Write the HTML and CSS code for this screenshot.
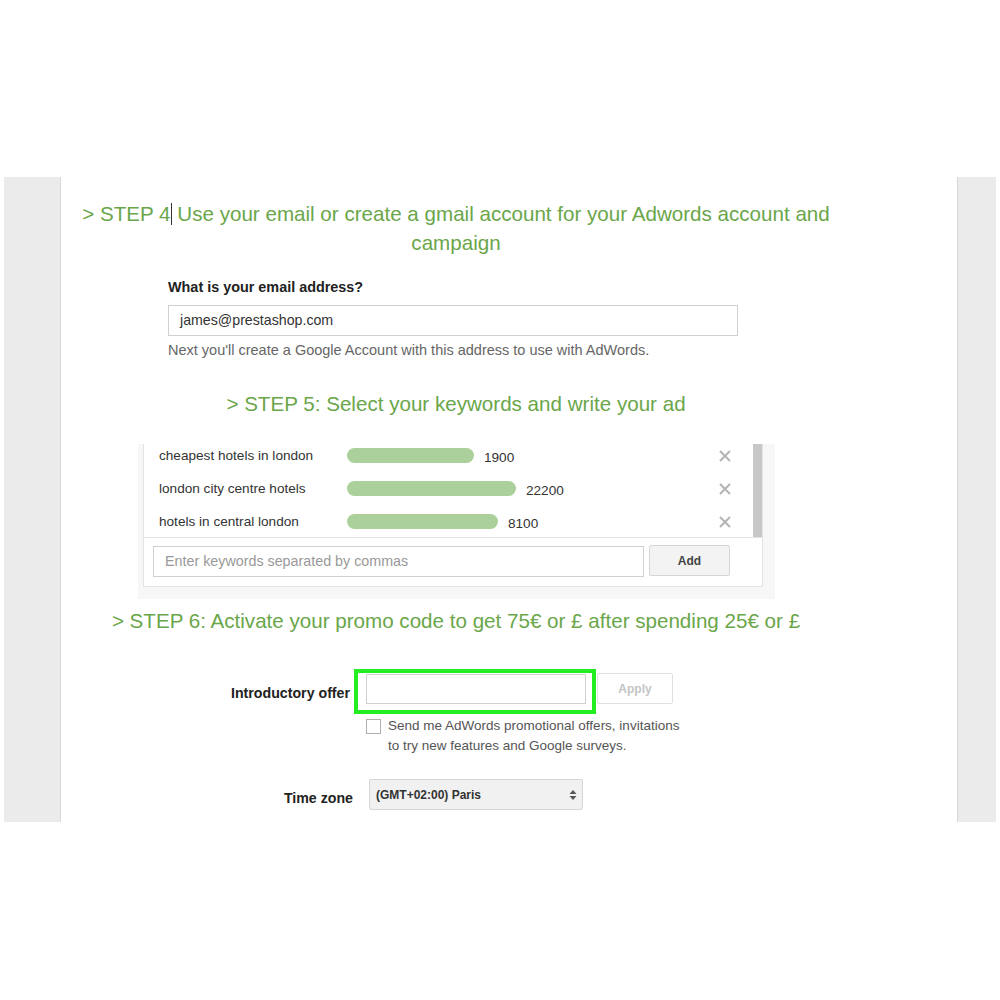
FILE: index.html
```html
<!DOCTYPE html>
<html lang="en">
<head>
    <meta charset="UTF-8">
    <meta name="viewport" content="width=device-width, initial-scale=1.0">
    <title>AdWords steps</title>
    <link rel="stylesheet" href="styles.css">
</head>
<body>
    <div class="frame">
        <div class="side side-left"></div>
        <div class="main">
            <h2 class="step">&gt; STEP 4<span class="caret"></span> Use your email or create a gmail account for your Adwords account and<br>campaign</h2>

            <div class="email-block">
                <label class="field-label" for="email">What is your email address?</label>
                <div class="text-input" id="email">james@prestashop.com</div>
                <p class="hint">Next you'll create a Google Account with this address to use with AdWords.</p>
            </div>

            <h2 class="step step-5">&gt; STEP 5: Select your keywords and write your ad</h2>

            <div class="keywords">
                <div class="kw-box">
                    <div class="kw-list">
                        <div class="kw-rows">
                            <div class="kw-row">
                                <span class="kw-name">cheapest hotels in london</span>
                                <span class="kw-bar" style="width:127px"></span>
                                <span class="kw-count">1900</span>
                                <svg class="kw-remove" width="12" height="12" viewBox="0 0 12 12"><path d="M1 1L11 11M11 1L1 11" stroke="#b4b4b4" stroke-width="2"/></svg>
                            </div>
                            <div class="kw-row">
                                <span class="kw-name">london city centre hotels</span>
                                <span class="kw-bar" style="width:169px"></span>
                                <span class="kw-count">22200</span>
                                <svg class="kw-remove" width="12" height="12" viewBox="0 0 12 12"><path d="M1 1L11 11M11 1L1 11" stroke="#b4b4b4" stroke-width="2"/></svg>
                            </div>
                            <div class="kw-row">
                                <span class="kw-name">hotels in central london</span>
                                <span class="kw-bar" style="width:151px"></span>
                                <span class="kw-count">8100</span>
                                <svg class="kw-remove" width="12" height="12" viewBox="0 0 12 12"><path d="M1 1L11 11M11 1L1 11" stroke="#b4b4b4" stroke-width="2"/></svg>
                            </div>
                        </div>
                        <div class="kw-scroll"></div>
                    </div>
                    <div class="kw-add">
                        <div class="kw-input">Enter keywords separated by commas</div>
                        <button class="btn">Add</button>
                    </div>
                </div>
            </div>

            <h2 class="step step-6">&gt; STEP 6: Activate your promo code to get 75€ or £ after spending 25€ or £</h2>

            <div class="offer-row">
                <span class="row-label">Introductory offer</span>
                <div class="highlight">
                    <div class="offer-input"></div>
                </div>
                <button class="btn btn-apply">Apply</button>
            </div>

            <div class="check-row">
                <span class="checkbox"></span>
                <p>Send me AdWords promotional offers, invitations<br>to try new features and Google surveys.</p>
            </div>

            <div class="tz-row">
                <span class="row-label tz-label">Time zone</span>
                <div class="select">
                    <span>(GMT+02:00) Paris</span>
                    <svg width="8" height="12" viewBox="0 0 8 12"><path d="M4 1L7.5 5H0.5Z M4 11L7.5 7H0.5Z" fill="#555"/></svg>
                </div>
            </div>
        </div>
        <div class="side side-right"></div>
    </div>
</body>
</html>
```

FILE: styles.css
```css
body {
    margin: 0;
    padding: 0;
    background-color: #fff;
    font-family: "Liberation Sans", Arial, sans-serif;
    color: #222;
}
.frame {
    display: flex;
    margin-top: 177px;
    height: 645px;
}
.side {
    background-color: #ebebeb;
}
.side-left {
    margin-left: 4px;
    width: 56px;
    border-right: 1px solid #d8d8d8;
}
.side-right {
    width: 38px;
    margin-right: 4px;
    border-left: 1px solid #d8d8d8;
}
.main {
    flex: 1;
    overflow: hidden;
    padding-top: 22px;
}
.step {
    width: 790px;
    margin: 0;
    font-size: 20.6px;
    font-weight: normal;
    line-height: 29px;
    color: #6aa64a;
    text-align: center;
}
.caret {
    display: inline-block;
    width: 1px;
    height: 22px;
    background-color: #333;
    vertical-align: -4px;
}
.email-block {
    margin: 22px 0 0 107px;
    width: 570px;
}
.field-label {
    display: block;
    font-size: 14.4px;
    font-weight: bold;
    line-height: 17px;
    color: #222;
}
.text-input {
    margin-top: 9px;
    height: 29px;
    border: 1px solid #d0d0d0;
    padding-left: 11px;
    font-size: 14.2px;
    line-height: 29px;
    color: #333;
}
.hint {
    margin: 5px 0 0;
    font-size: 14.5px;
    line-height: 18px;
    color: #666;
}
.step-5 {
    margin-top: 30px;
}
.keywords {
    margin: 26px 0 0 77px;
    width: 637px;
    height: 155px;
    background-color: #f7f7f7;
}
.kw-box {
    margin-left: 5px;
    width: 618px;
    background-color: #fff;
    border: 1px solid #e3e3e3;
    border-top: none;
}
.kw-list {
    display: flex;
    height: 93px;
    overflow: hidden;
    border-bottom: 1px solid #e3e3e3;
}
.kw-rows {
    flex: 1;
    margin-top: -5px;
}
.kw-row {
    display: flex;
    align-items: center;
    height: 33px;
    padding-left: 15px;
    font-size: 13.6px;
    color: #333;
}
.kw-name {
    width: 188px;
}
.kw-bar {
    height: 15px;
    border-radius: 8px;
    background-color: #abd09c;
}
.kw-count {
    margin: 4px 0 0 10px;
    flex: 1;
}
.kw-remove {
    margin-right: 22px;
}
.kw-scroll {
    width: 9px;
    background-color: #c8c8c8;
}
.kw-add {
    display: flex;
    gap: 5px;
    padding: 8px 0 9px 9px;
}
.kw-input {
    width: 478px;
    height: 29px;
    border: 1px solid #d0d0d0;
    padding-left: 11px;
    font-size: 14.3px;
    line-height: 29px;
    color: #999;
}
.btn {
    width: 81px;
    height: 31px;
    margin-top: -1px;
    border: 1px solid #d6d6d6;
    border-radius: 2px;
    background-color: #f3f3f3;
    font-family: "Liberation Sans", Arial, sans-serif;
    font-size: 12px;
    font-weight: bold;
    color: #444;
}
.step-6 {
    margin-top: 7px;
}
.offer-row {
    display: flex;
    align-items: flex-start;
    margin-top: 34px;
}
.row-label {
    width: 289px;
    text-align: right;
    font-size: 14.2px;
    font-weight: bold;
    color: #222;
}
.offer-row .row-label {
    padding-top: 16px;
    line-height: 17px;
}
.highlight {
    margin-left: 4px;
    width: 220px;
    height: 36px;
    padding: 1px 6px 0 8px;
    border: 4px solid #22ee22;
}
.offer-input {
    height: 28px;
    border: 1px solid #d0d0d0;
}
.btn-apply {
    width: 76px;
    margin: 4px 0 0 1px;
    background-color: #fff;
    border-color: #e0e0e0;
    color: #c4c4c4;
}
.check-row {
    display: flex;
    margin: 2px 0 0 305px;
}
.checkbox {
    width: 13px;
    height: 13px;
    margin-top: 3px;
    border: 1px solid #b0b0b0;
    background-color: #fff;
}
.check-row p {
    margin: 0 0 0 7px;
    font-size: 13.5px;
    line-height: 20px;
    color: #555;
}
.tz-row {
    display: flex;
    align-items: center;
    margin-top: 23px;
}
.tz-label {
    width: 292px;
    padding-top: 7px;
}
.select {
    display: flex;
    align-items: center;
    justify-content: space-between;
    margin-left: 16px;
    width: 201px;
    height: 29px;
    padding: 0 5px 0 6px;
    border: 1px solid #d6d6d6;
    border-radius: 2px;
    background-color: #f1f1f1;
    font-size: 12px;
    font-weight: bold;
    color: #333;
}
```
